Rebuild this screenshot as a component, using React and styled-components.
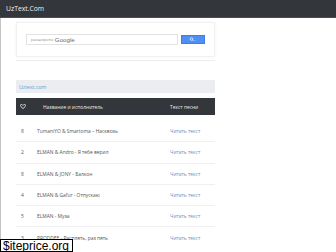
import React from "react";
import styled, { createGlobalStyle } from "styled-components";

const GlobalStyle = createGlobalStyle`
  html, body {
    margin: 0;
    padding: 0;
    background: #ffffff;
    font-family: "Open Sans", "Liberation Sans", sans-serif;
    overflow: hidden;
  }
`;

const Page = styled.div`
  width: 336px;
  height: 252px;
  display: flex;
  flex-direction: column;
  position: relative;
  overflow: hidden;
`;

const TopBar = styled.div`
  height: 18px;
  flex-shrink: 0;
  background: #33363a;
  border-bottom: 1px solid #4a4d52;
  box-sizing: border-box;
  display: flex;
  align-items: center;
  padding-left: 6px;
  color: #f2f2f2;
  font-size: 6.8px;
`;

const Main = styled.div`
  flex: 1;
  border-left: 1px solid #c4c4c4;
  padding-left: 15px;
`;

const Column = styled.div`
  width: 199px;
  display: flex;
  flex-direction: column;
`;

const SearchCard = styled.div`
  margin-top: 4px;
  height: 35px;
  box-sizing: border-box;
  border: 1px solid #f1f1f1;
  box-shadow: 0 0 3px rgba(0, 0, 0, 0.05);
  display: flex;
  align-items: center;
  padding-left: 9px;
  gap: 3px;
`;

const SearchInput = styled.div`
  width: 152px;
  height: 11px;
  box-sizing: border-box;
  border: 1px solid #e2e2e2;
  display: flex;
  align-items: center;
  padding-left: 4px;
  gap: 1.5px;
`;

const Powered = styled.span`
  font-size: 4px;
  color: #8a8a8a;
`;

const GoogleMark = styled.span`
  font-size: 6.2px;
  color: #6a6a6a;
  font-family: "Liberation Sans", sans-serif;
`;

const SearchButton = styled.div`
  width: 24px;
  height: 9px;
  background: #4d8ff5;
  border: 1px solid #3c7de6;
  box-sizing: border-box;
  display: flex;
  align-items: center;
  justify-content: center;
`;

const Rule = styled.div`
  height: 1px;
  background: #ececec;
  margin-top: 3px;
`;

const Crumb = styled.div`
  margin-top: 19px;
  height: 13px;
  background: #ebedf0;
  display: flex;
  align-items: center;
  padding-left: 3px;
  font-size: 5.2px;
  color: #6b9bd3;
`;

const HeadRow = styled.div`
  margin-top: 5px;
  height: 17px;
  background: #33363a;
  display: grid;
  grid-template-columns: 27px 127px 1fr;
  align-items: center;
  color: #e8e8e8;
  font-size: 4.9px;
`;

const HeadIcon = styled.div`
  padding-left: 4px;
  display: flex;
  align-items: center;
`;

const HeadTitle = styled.div`
  white-space: nowrap;
`;

const Body = styled.div`
  padding-top: 5px;
`;

const Row = styled.div`
  height: 21.3px;
  box-sizing: border-box;
  border-top: ${(p) => (p.$first ? "none" : "1px solid #f0f0f0")};
  display: grid;
  grid-template-columns: 21px 133px 1fr;
  align-items: center;
  font-size: 4.9px;
  color: #555555;
  white-space: nowrap;
`;

const Num = styled.div`
  padding-left: 5px;
`;

const Link = styled.div`
  color: #6b8fc2;
`;

const Stamp = styled.div`
  position: absolute;
  left: 0;
  bottom: 0;
  width: 73px;
  height: 13px;
  box-sizing: border-box;
  background: #ffffff;
  border: 1px solid #000000;
  display: flex;
  align-items: center;
  padding-left: 2px;
  font-family: "Liberation Sans", sans-serif;
  font-size: 12px;
  color: #000000;
`;

const songs = [
  { n: 8, title: "TumaniYO & Smartoma – Насквозь" },
  { n: 2, title: "ELMAN & Andro - Я тебе верил" },
  { n: 8, title: "ELMAN & JONY - Балкон" },
  { n: 4, title: "ELMAN & Gafur - Отпускаю" },
  { n: 5, title: "ELMAN - Муза" },
  { n: 3, title: "PRODDEE - Расплять, раз пять" },
];

const Heart = () => (
  <svg width="6" height="5" viewBox="0 0 12 10">
    <path
      d="M6 9.2 L1.6 5 C0.2 3.6 0.6 1.2 2.6 0.9 C4 0.7 5.3 1.6 6 2.8 C6.7 1.6 8 0.7 9.4 0.9 C11.4 1.2 11.8 3.6 10.4 5 Z"
      fill="none"
      stroke="#ffffff"
      strokeWidth="1.6"
      strokeLinejoin="round"
    />
  </svg>
);

const Magnifier = () => (
  <svg width="8" height="5" viewBox="0 0 16 10">
    <circle cx="5" cy="4" r="2.6" fill="none" stroke="#ffffff" strokeWidth="1.4" />
    <line x1="7" y1="6" x2="8.6" y2="7.6" stroke="#ffffff" strokeWidth="1.4" />
    <line x1="11" y1="7.5" x2="13.5" y2="7.5" stroke="#dfe9fb" strokeWidth="1" />
  </svg>
);

const App = () => {
  return (
    <Page>
      <GlobalStyle />
      <TopBar>UzText.Com</TopBar>
      <Main>
        <Column>
          <SearchCard>
            <SearchInput>
              <Powered>расширено</Powered>
              <GoogleMark>Google</GoogleMark>
            </SearchInput>
            <SearchButton>
              <Magnifier />
            </SearchButton>
          </SearchCard>
          <Rule />
          <Crumb>Uztext.com</Crumb>
          <HeadRow>
            <HeadIcon>
              <Heart />
            </HeadIcon>
            <HeadTitle>Название и исполнитель</HeadTitle>
            <HeadTitle>Текст песни</HeadTitle>
          </HeadRow>
          <Body>
            {songs.map((s, i) => (
              <Row key={i} $first={i === 0}>
                <Num>{s.n}</Num>
                <div>{s.title}</div>
                <Link>Читать текст</Link>
              </Row>
            ))}
          </Body>
        </Column>
      </Main>
      <Stamp>$iteprice.org</Stamp>
    </Page>
  );
};

export default App;
